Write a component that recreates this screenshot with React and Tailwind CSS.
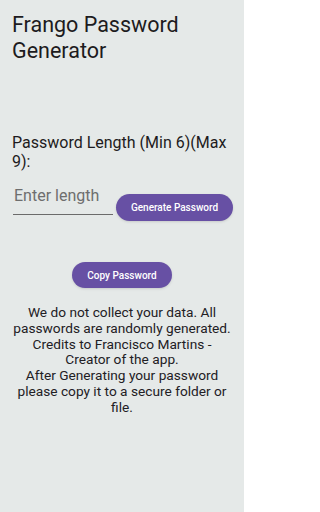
export default function App() {
  return (
    <main
      className="w-[244px] h-[512px] bg-[#e5e9e8] text-[#1d1b20] overflow-hidden"
      style={{ fontFamily: 'Roboto, "Noto Sans", sans-serif' }}
    >
      <h1 className="px-3 pt-[12px] text-[21.5px] leading-[26px] font-normal">
        Frango Password Generator
      </h1>

      <p className="px-3 mt-[69px] text-[16px] leading-[19px]">
        Password Length (Min 6)(Max 9):
      </p>

      <div className="flex items-end gap-[3px] pl-[13px] mt-[13px]">
        <div className="w-[100px] border-b border-[#6b6b6b] pb-[6px]">
          <span className="pl-[1px] text-[16px] leading-[20px] text-[#6e6e6e]">Enter length</span>
        </div>
        <button className="w-[117px] h-[27px] rounded-full bg-[#6750a4] text-white text-[10px] font-medium shadow-sm mb-[-6px]">
          Generate Password
        </button>
      </div>

      <div className="flex justify-center mt-[47px]">
        <button className="w-[100px] h-[26px] rounded-full bg-[#6750a4] text-white text-[10px] font-medium shadow-sm">
          Copy Password
        </button>
      </div>

      <p className="mt-[17px] px-[10px] text-center text-[13.7px] leading-[15.8px] text-[#222024]">
        We do not collect your data. All passwords are randomly generated. Credits to Francisco Martins - Creator of the app.
        <br />
        After Generating your password please copy it to a secure folder or file.
      </p>
    </main>
  )
}
